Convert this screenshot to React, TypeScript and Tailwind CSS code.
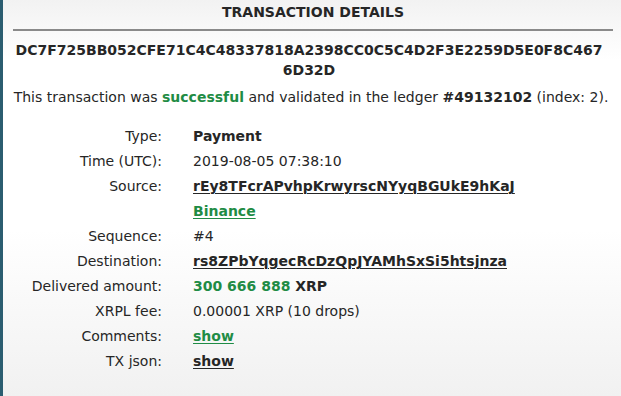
import React from 'react';

interface Row {
  label: string;
  value: React.ReactNode;
}

const green = 'text-[#1f8c45]';
const link = 'font-bold underline underline-offset-2 decoration-1';

const rows: Row[] = [
  { label: 'Type:', value: <span className="font-bold">Payment</span> },
  { label: 'Time (UTC):', value: '2019-08-05 07:38:10' },
  { label: 'Source:', value: <a href="#" className={link}>rEy8TFcrAPvhpKrwyrscNYyqBGUkE9hKaJ</a> },
  { label: '', value: <a href="#" className={`${link} ${green}`}>Binance</a> },
  { label: 'Sequence:', value: '#4' },
  { label: 'Destination:', value: <a href="#" className={link}>rs8ZPbYqgecRcDzQpJYAMhSxSi5htsjnza</a> },
  {
    label: 'Delivered amount:',
    value: (
      <span className="font-bold">
        <span className={green}>300 666 888</span> XRP
      </span>
    ),
  },
  { label: 'XRPL fee:', value: '0.00001 XRP (10 drops)' },
  { label: 'Comments:', value: <a href="#" className={`${link} ${green}`}>show</a> },
  { label: 'TX json:', value: <a href="#" className={link}>show</a> },
];

const App: React.FC = () => (
  <div
    className="w-[621px] h-[396px] border-l-[3px] border-[#2b5d70] bg-[linear-gradient(to_bottom,#f2f2f2_0px,#ffffff_60px,#ffffff_230px,#f1f1f1_396px)] text-[#262626] text-[14px] overflow-hidden"
    style={{ fontFamily: '"DejaVu Sans", Verdana, sans-serif' }}
  >
    <div className="pl-[10px] pr-[8px]">
      <h2 className="pt-[4px] text-center text-[14px] leading-[16px] font-bold">TRANSACTION DETAILS</h2>
      <div className="mt-[9px] h-[2px] bg-[#8a8a8a]" />
    </div>
    <div className="mt-[9px] ml-[11px] w-[590px] text-center font-bold leading-[20px] break-all">
      DC7F725BB052CFE71C4C48337818A2398CC0C5C4D2F3E2259D5E0F8C4676D32D
    </div>
    <p className="mt-[7px] pl-[6px] pr-[8px] text-center leading-[20px]">
      This transaction was <span className={`font-bold ${green}`}>successful</span> and validated in the ledger{' '}
      <span className="font-bold">#49132102</span> (index: 2).
    </p>
    <div className="mt-[17px] grid grid-cols-[159px_1fr] gap-x-[31px]">
      {rows.map((r, i) => (
        <React.Fragment key={i}>
          <div className="text-right leading-[25px] h-[25px]">{r.label}</div>
          <div className="leading-[25px] h-[25px]">{r.value}</div>
        </React.Fragment>
      ))}
    </div>
  </div>
);

export default App;
